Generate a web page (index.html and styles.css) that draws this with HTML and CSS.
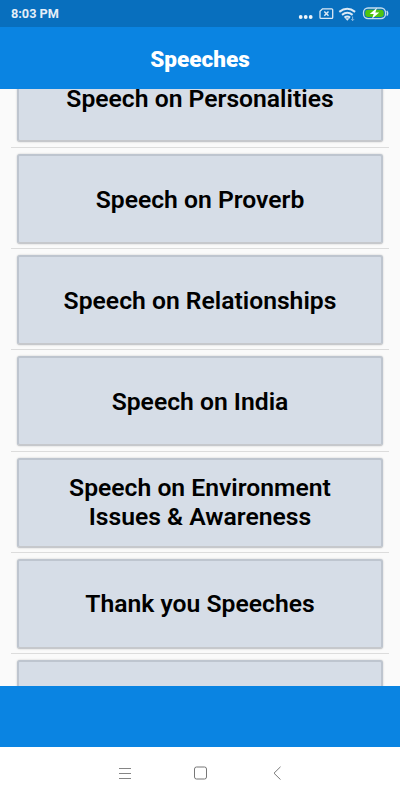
FILE: index.html
```html
<!DOCTYPE html>
<html lang="en">
<head>
  <meta charset="utf-8">
  <title>Speeches</title>
  <link rel="stylesheet" href="styles.css">
</head>
<body>
  <div class="screen">
    <div class="status-bar">
      <span class="clock">8:03 PM</span>
      <svg class="status-icons" width="92" height="20" viewBox="0 0 92 20">
        <g fill="#eef5fb">
          <circle cx="2.700" cy="12" r="1.900"/>
          <circle cx="7.700" cy="12" r="1.900"/>
          <circle cx="12.700" cy="12" r="1.900"/>
        </g>
        <g fill="none" stroke="#dce9f5" stroke-width="1.300">
          <path d="M24.500 3.800h9.200q1 0 1 1v7.600q0 1-1 1H23q-1 0-1-1V6.300z"/>
          <path d="M26.300 6.500l4.200 4.200M30.500 6.500l-4.200 4.200" stroke-width="1.500"/>
        </g>
        <g fill="none" stroke="#dce9f5" stroke-width="2">
          <path d="M41.300 6.900q7.900-6.200 15.800 0"/>
          <path d="M44 9.900q5.300-4.200 10.600 0"/>
          <path d="M46.500 12.600q2.800-2 5.600 0"/>
        </g>
        <path d="M47 13.300h4.600l-2.300 2.400z" fill="#dce9f5"/>
        <path d="M54.600 11.500v4M53.200 14.200l1.400 1.500 1.400-1.500" fill="none" stroke="#8fbce3"/>
        <rect x="65.500" y="3" width="22" height="10.600" rx="4.500" fill="#0a6fbd" stroke="#c4deee" stroke-width="1.300"/>
        <rect x="67.200" y="4.700" width="18.600" height="7.200" rx="3" fill="#4fc40f"/>
        <path d="M88.800 5.800q1.900 2.400 0 4.800" fill="none" stroke="#c4deee" stroke-width="1.300"/>
        <path d="M79 2.700L71.700 9h4L74 13.700l7.300-6.300h-4z" fill="#fff"/>
      </svg>
    </div>
    <div class="header">Speeches</div>
    <div class="list">
      <div class="item"><div class="card">Speech on Personalities</div></div>
      <div class="item"><div class="card">Speech on Proverb</div></div>
      <div class="item"><div class="card">Speech on Relationships</div></div>
      <div class="item"><div class="card">Speech on India</div></div>
      <div class="item"><div class="card two-lines">Speech on Environment<br>Issues &amp; Awareness</div></div>
      <div class="item"><div class="card">Thank you Speeches</div></div>
      <div class="item"><div class="card"></div></div>
    </div>
    <div class="banner"></div>
    <div class="nav-bar">
      <svg width="14" height="14" viewBox="0 0 14 14">
        <path d="M1 2.500h12M1 7.500h12M1 12.500h12" fill="none" stroke="#858585"/>
      </svg>
      <svg width="14" height="14" viewBox="0 0 14 14">
        <rect x=".5" y="1" width="12" height="12" rx="2" fill="none" stroke="#777"/>
      </svg>
      <svg width="14" height="14" viewBox="0 0 14 14">
        <path d="M10.500 .8L4 7.200l6.500 6.400" fill="none" stroke="#777"/>
      </svg>
    </div>
  </div>
</body>
</html>
```

FILE: styles.css
```css
* {
  box-sizing: border-box;
  margin: 0;
  padding: 0;
}

body {
  font-family: Roboto, sans-serif;
  background-color: #fff;
}

.screen {
  display: flex;
  flex-direction: column;
  width: 400px;
  height: 800px;
  overflow: hidden;
}

.status-bar {
  display: flex;
  justify-content: space-between;
  height: 27px;
  padding: 5px 10px 0 11px;
  background-color: #086fbe;
}

.clock {
  color: #e4eef8;
  font-size: 12.7px;
  font-weight: 700;
  line-height: 18px;
}

.header {
  height: 62px;
  background-color: #0a84e2;
  color: #fff;
  font-size: 22.5px;
  font-weight: 900;
  line-height: 65px;
  text-align: center;
}

.list {
  height: 597px;
  padding: 0 11px;
  background-color: #fafafa;
  overflow: hidden;
}

.item {
  height: 101.2px;
  padding: 6px 6px 0;
  border-bottom: 1px solid #dcdcdc;
}

.item:first-child {
  margin-top: -42.1px;
}

.item:first-child .card {
  height: 89.4px;
  padding-top: 2px;
}

.card {
  display: flex;
  align-items: center;
  justify-content: center;
  height: 90px;
  border: 2px solid #bec5cf;
  border-bottom-color: #c6c8cc;
  border-radius: 3px;
  background-color: #d6dde7;
  box-shadow: 0 0 2px rgba(0, 0, 0, 0.22);
  color: #000;
  font-size: 24.7px;
  font-weight: 600;
  line-height: 29px;
  text-align: center;
}

.two-lines {
  padding-bottom: 1px;
}

.banner {
  height: 61px;
  background-color: #0a84e2;
}

.nav-bar {
  display: flex;
  justify-content: center;
  gap: 62px;
  height: 53px;
  padding: 19px 0 0 2px;
  background-color: #fff;
}
```
